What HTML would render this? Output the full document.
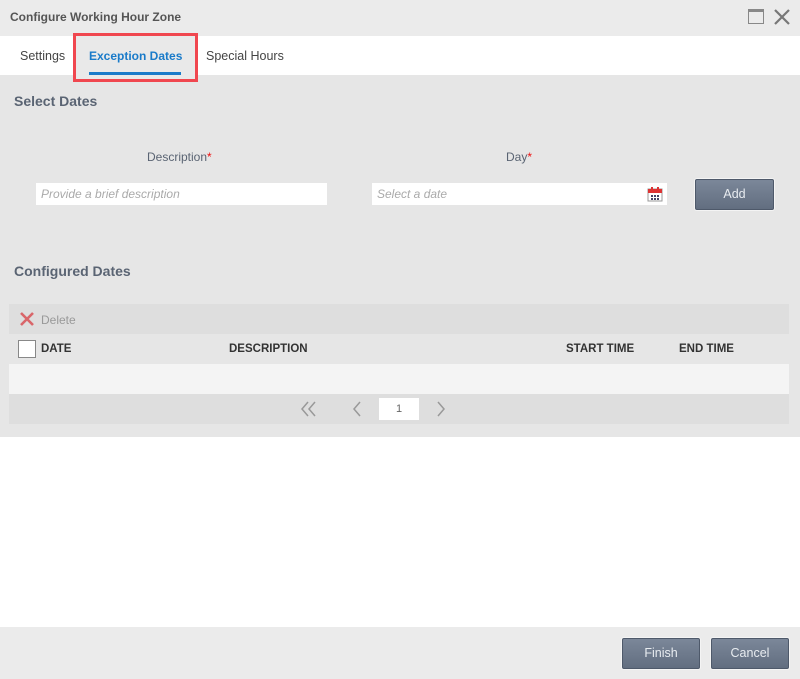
<!DOCTYPE html>
<html><head><meta charset="utf-8"><style>
*{margin:0;padding:0;box-sizing:border-box}
body{width:800px;height:679px;position:relative;background:#fff;font-family:"Liberation Sans",sans-serif;overflow:hidden}
.a{position:absolute}
.btn{position:absolute;background:linear-gradient(#7b8799,#626e80);border:1px solid #4e596a;border-radius:2px;box-shadow:0 0 0 1px #f4f4f4;color:#e8ecf0;font-size:12.5px;text-align:center}
.hdr{font-size:11.5px;color:#333;font-weight:bold;top:343px}
</style></head><body>
<div class="a" style="left:0;top:0;width:800px;height:36px;background:#ebebeb"></div>
<div class="a" style="left:10px;top:10px;font-size:12px;font-weight:bold;color:#555">Configure Working Hour Zone</div>
<div class="a" style="left:748px;top:9px;width:16px;height:15px;border:1.5px solid #888;border-top-width:3px"></div>
<svg class="a" style="left:773px;top:8px" width="18" height="18"><path d="M2 2L16 16M16 2L2 16" stroke="#777" stroke-width="2.2"/></svg>
<div class="a" style="left:0;top:36px;width:800px;height:39px;background:#fff"></div>
<div class="a" style="left:0;top:75px;width:800px;height:362px;background:#e6e6e6"></div>
<div class="a" style="left:20px;top:49px;font-size:12.5px;color:#444">Settings</div>
<div class="a" style="left:76px;top:35px;width:120px;height:45px;background:#e9e9e9"></div>
<div class="a" style="left:89px;top:49px;font-size:12px;color:#1a7bc9;font-weight:bold">Exception Dates</div>
<div class="a" style="left:89px;top:72px;width:92px;height:3px;background:#1a7bc9"></div>
<div class="a" style="left:73px;top:33px;width:125px;height:49px;border:3px solid #f0474f;z-index:5"></div>
<div class="a" style="left:206px;top:49px;font-size:12.5px;color:#444">Special Hours</div>
<div class="a" style="left:14px;top:93px;font-size:14px;color:#5a6473;font-weight:bold">Select Dates</div>
<div class="a" style="left:147px;top:150px;font-size:12px;color:#5a6473">Description<span style="color:#e11">*</span></div>
<div class="a" style="left:506px;top:150px;font-size:12px;color:#5a6473">Day<span style="color:#e11">*</span></div>
<div class="a" style="left:36px;top:183px;width:291px;height:22px;background:#fff;font-size:12px;font-style:italic;color:#aaa;padding:4px 5px">Provide a brief description</div>
<div class="a" style="left:372px;top:183px;width:295px;height:22px;background:#fff;font-size:12px;font-style:italic;color:#aaa;padding:4px 5px">Select a date</div>
<svg class="a" style="left:647px;top:186px" width="16" height="16"><rect x="1" y="3" width="14" height="12" fill="#fff" stroke="#999"/><rect x="1" y="3" width="14" height="4" fill="#d33"/><rect x="4" y="1" width="2" height="4" fill="#d33"/><rect x="10" y="1" width="2" height="4" fill="#d33"/><g fill="#446"><rect x="4" y="9" width="2" height="2"/><rect x="7" y="9" width="2" height="2"/><rect x="10" y="9" width="2" height="2"/><rect x="4" y="12" width="2" height="2"/><rect x="7" y="12" width="2" height="2"/><rect x="10" y="12" width="2" height="2"/></g></svg>
<div class="btn" style="left:695px;top:179px;width:79px;height:31px;line-height:29px">Add</div>
<div class="a" style="left:14px;top:263px;font-size:14px;color:#5a6473;font-weight:bold">Configured Dates</div>
<div class="a" style="left:9px;top:304px;width:780px;height:30px;background:#dedede"></div>
<svg class="a" style="left:19px;top:311px" width="16" height="16"><path d="M2 2L14 14M14 2L2 14" stroke="#d9666a" stroke-width="2.6"/></svg>
<div class="a" style="left:41px;top:313px;font-size:12px;color:#999">Delete</div>
<div class="a" style="left:9px;top:334px;width:780px;height:30px;background:#e6e6e6"></div>
<div class="a" style="left:18px;top:340px;width:18px;height:18px;background:#fff;border:1px solid #888"></div>
<div class="a hdr" style="left:41px">DATE</div>
<div class="a hdr" style="left:229px">DESCRIPTION</div>
<div class="a hdr" style="left:566px">START TIME</div>
<div class="a hdr" style="left:679px">END TIME</div>
<div class="a" style="left:9px;top:364px;width:780px;height:30px;background:#f4f4f4"></div>
<div class="a" style="left:9px;top:394px;width:780px;height:30px;background:#dedede"></div>
<svg class="a" style="left:300px;top:401px" width="18" height="16"><path d="M8 1L2 8L8 15M15 1L9 8L15 15" stroke="#999" fill="none" stroke-width="1.5"/></svg>
<svg class="a" style="left:352px;top:401px" width="10" height="16"><path d="M8 1L2 8L8 15" stroke="#999" fill="none" stroke-width="1.5"/></svg>
<div class="a" style="left:379px;top:398px;width:40px;height:22px;background:#fff;font-size:11px;color:#666;text-align:center;line-height:22px">1</div>
<svg class="a" style="left:436px;top:401px" width="10" height="16"><path d="M2 1L8 8L2 15" stroke="#999" fill="none" stroke-width="1.5"/></svg>
<div class="a" style="left:0;top:627px;width:800px;height:52px;background:#ebebeb"></div>
<div class="btn" style="left:622px;top:638px;width:78px;height:31px;line-height:29px">Finish</div>
<div class="btn" style="left:711px;top:638px;width:78px;height:31px;line-height:29px">Cancel</div>
</body></html>
